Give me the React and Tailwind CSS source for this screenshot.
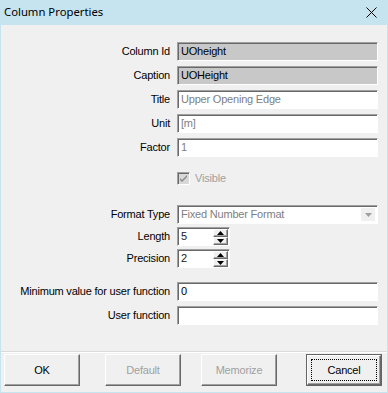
import React from "react";

const font = "font-['Liberation_Sans',Arial,sans-serif] text-[11px] tracking-[-0.2px]";
const sunken =
  "border border-t-[#a0a0a0] border-l-[#a0a0a0] border-b-white border-r-white shadow-[inset_1px_1px_0_#696969]";
const raised =
  "border border-t-white border-l-white border-b-[#696969] border-r-[#696969] shadow-[inset_-1px_-1px_0_#a0a0a0]";

const Label = ({ children }) => (
  <div className="w-[176px] shrink-0 pr-[7px] text-right text-black leading-none">
    {children}
  </div>
);

const Field = ({ value, disabled, dim, className = "" }) => (
  <div
    className={`${sunken} h-[19px] flex items-center pl-[3px] leading-none ${
      disabled ? "bg-[#c8c8c8]" : "bg-white"
    } ${dim ? "text-[#808080]" : "text-black"} ${className}`}
  >
    {value}
  </div>
);

const Row = ({ label, children }) => (
  <div className="flex items-center">
    <Label>{label}</Label>
    {children}
  </div>
);

const Spin = ({ value }) => (
  <div className={`${sunken} bg-white h-[19px] w-[53px] flex items-center pl-[3px] pr-[1px] text-[#202020] leading-none`}>
    <span className="flex-1">{value}</span>
    <div className="flex flex-col w-[15px] h-[16px]">
      <div className={`${raised} bg-[#f0f0f0] flex-1 flex items-center justify-center`}>
        <svg width="7" height="4" viewBox="0 0 7 4">
          <path d="M3.5 0L7 4H0z" fill="#000" />
        </svg>
      </div>
      <div className={`${raised} bg-[#f0f0f0] flex-1 flex items-center justify-center`}>
        <svg width="7" height="4" viewBox="0 0 7 4">
          <path d="M0 0h7L3.5 4z" fill="#000" />
        </svg>
      </div>
    </div>
  </div>
);

const Btn = ({ children, disabled, isDefault }) => (
  <div
    className={`h-[32px] w-[76px] ${
      isDefault ? "border border-[#646464]" : ""
    } flex`}
  >
    <div
      className={`${raised} flex-1 bg-[#f0f0f0] flex items-center justify-center ${
        disabled ? "text-[#a0a0a0]" : "text-black"
      }`}
    >
      {isDefault ? (
        <div className="border border-dotted border-black w-[66px] h-[22px] flex items-center justify-center">
          {children}
        </div>
      ) : (
        children
      )}
    </div>
  </div>
);

export default function App() {
  return (
    <div className={`w-[388px] h-[393px] bg-[#c5e4f0] flex flex-col px-[1px] pb-[1px] ${font}`}>
      <div className="h-[25px] flex items-center justify-between pl-[3px] pr-[10px] shrink-0">
        <span className="font-['Noto_Sans',sans-serif] text-[11.3px] tracking-normal text-black">Column Properties</span>
        <svg width="11" height="11" viewBox="0 0 11 11">
          <path d="M0.5 0.5L10.5 10.5M10.5 0.5L0.5 10.5" stroke="#000" strokeWidth="1" />
        </svg>
      </div>
      <div className="flex-1 bg-[#f0f0f0] flex flex-col">
        <div className="pt-[17px] pr-[9px] flex flex-col gap-[5px]">
          <Row label="Column Id">
            <Field value="UOheight" disabled className="flex-1" />
          </Row>
          <Row label="Caption">
            <Field value="UOHeight" disabled className="flex-1" />
          </Row>
          <Row label="Title">
            <Field value="Upper Opening Edge" dim className="flex-1" />
          </Row>
          <Row label="Unit">
            <Field value="[m]" dim className="flex-1" />
          </Row>
          <Row label="Factor">
            <Field value="1" dim className="flex-1" />
          </Row>
        </div>

        <div className="flex items-center mt-[15px] pl-[176px] text-[#a0a0a0] leading-none">
          <div className={`${sunken} w-[13px] h-[13px] bg-[#d8d8d8] flex items-center justify-center`}>
            <svg width="9" height="9" viewBox="0 0 9 9">
              <path d="M1 4l2 2 5-5v2l-5 5-2-2z" fill="#8a8a8a" />
            </svg>
          </div>
          <span className="ml-[5px]">Visible</span>
        </div>

        <div className="pt-[20px] pr-[9px] flex flex-col gap-[3px]">
          <Row label="Format Type">
            <div className={`${sunken} bg-white h-[19px] flex-1 flex items-center pl-[3px] pr-[1px] text-[#808080] leading-none`}>
              <span className="flex-1">Fixed Number Format</span>
              <div className="w-[16px] h-[15px] bg-[#f0f0f0] border border-white flex items-center justify-center">
                <svg width="7" height="4" viewBox="0 0 7 4">
                  <path d="M0 0h7L3.5 4z" fill="#a0a0a0" />
                </svg>
              </div>
            </div>
          </Row>
          <Row label="Length">
            <Spin value="5" />
          </Row>
          <Row label="Precision">
            <Spin value="2" />
          </Row>
        </div>

        <div className="pt-[14px] pr-[9px] flex flex-col gap-[5px]">
          <Row label="Minimum value for user function">
            <Field value="0" className="flex-1" />
          </Row>
          <Row label="User function">
            <Field value="" className="flex-1" />
          </Row>
        </div>

        <div className="mt-auto border-t border-t-[#dadada] shadow-[inset_0_1px_0_#fff] pt-[2px] pb-[6px] pl-[3px] pr-[5px] flex items-center">
          <Btn>OK</Btn>
          <div className="ml-[25px]">
            <Btn disabled>Default</Btn>
          </div>
          <div className="ml-[20px]">
            <Btn disabled>Memorize</Btn>
          </div>
          <div className="ml-auto">
            <Btn isDefault>Cancel</Btn>
          </div>
        </div>
      </div>
    </div>
  );
}
